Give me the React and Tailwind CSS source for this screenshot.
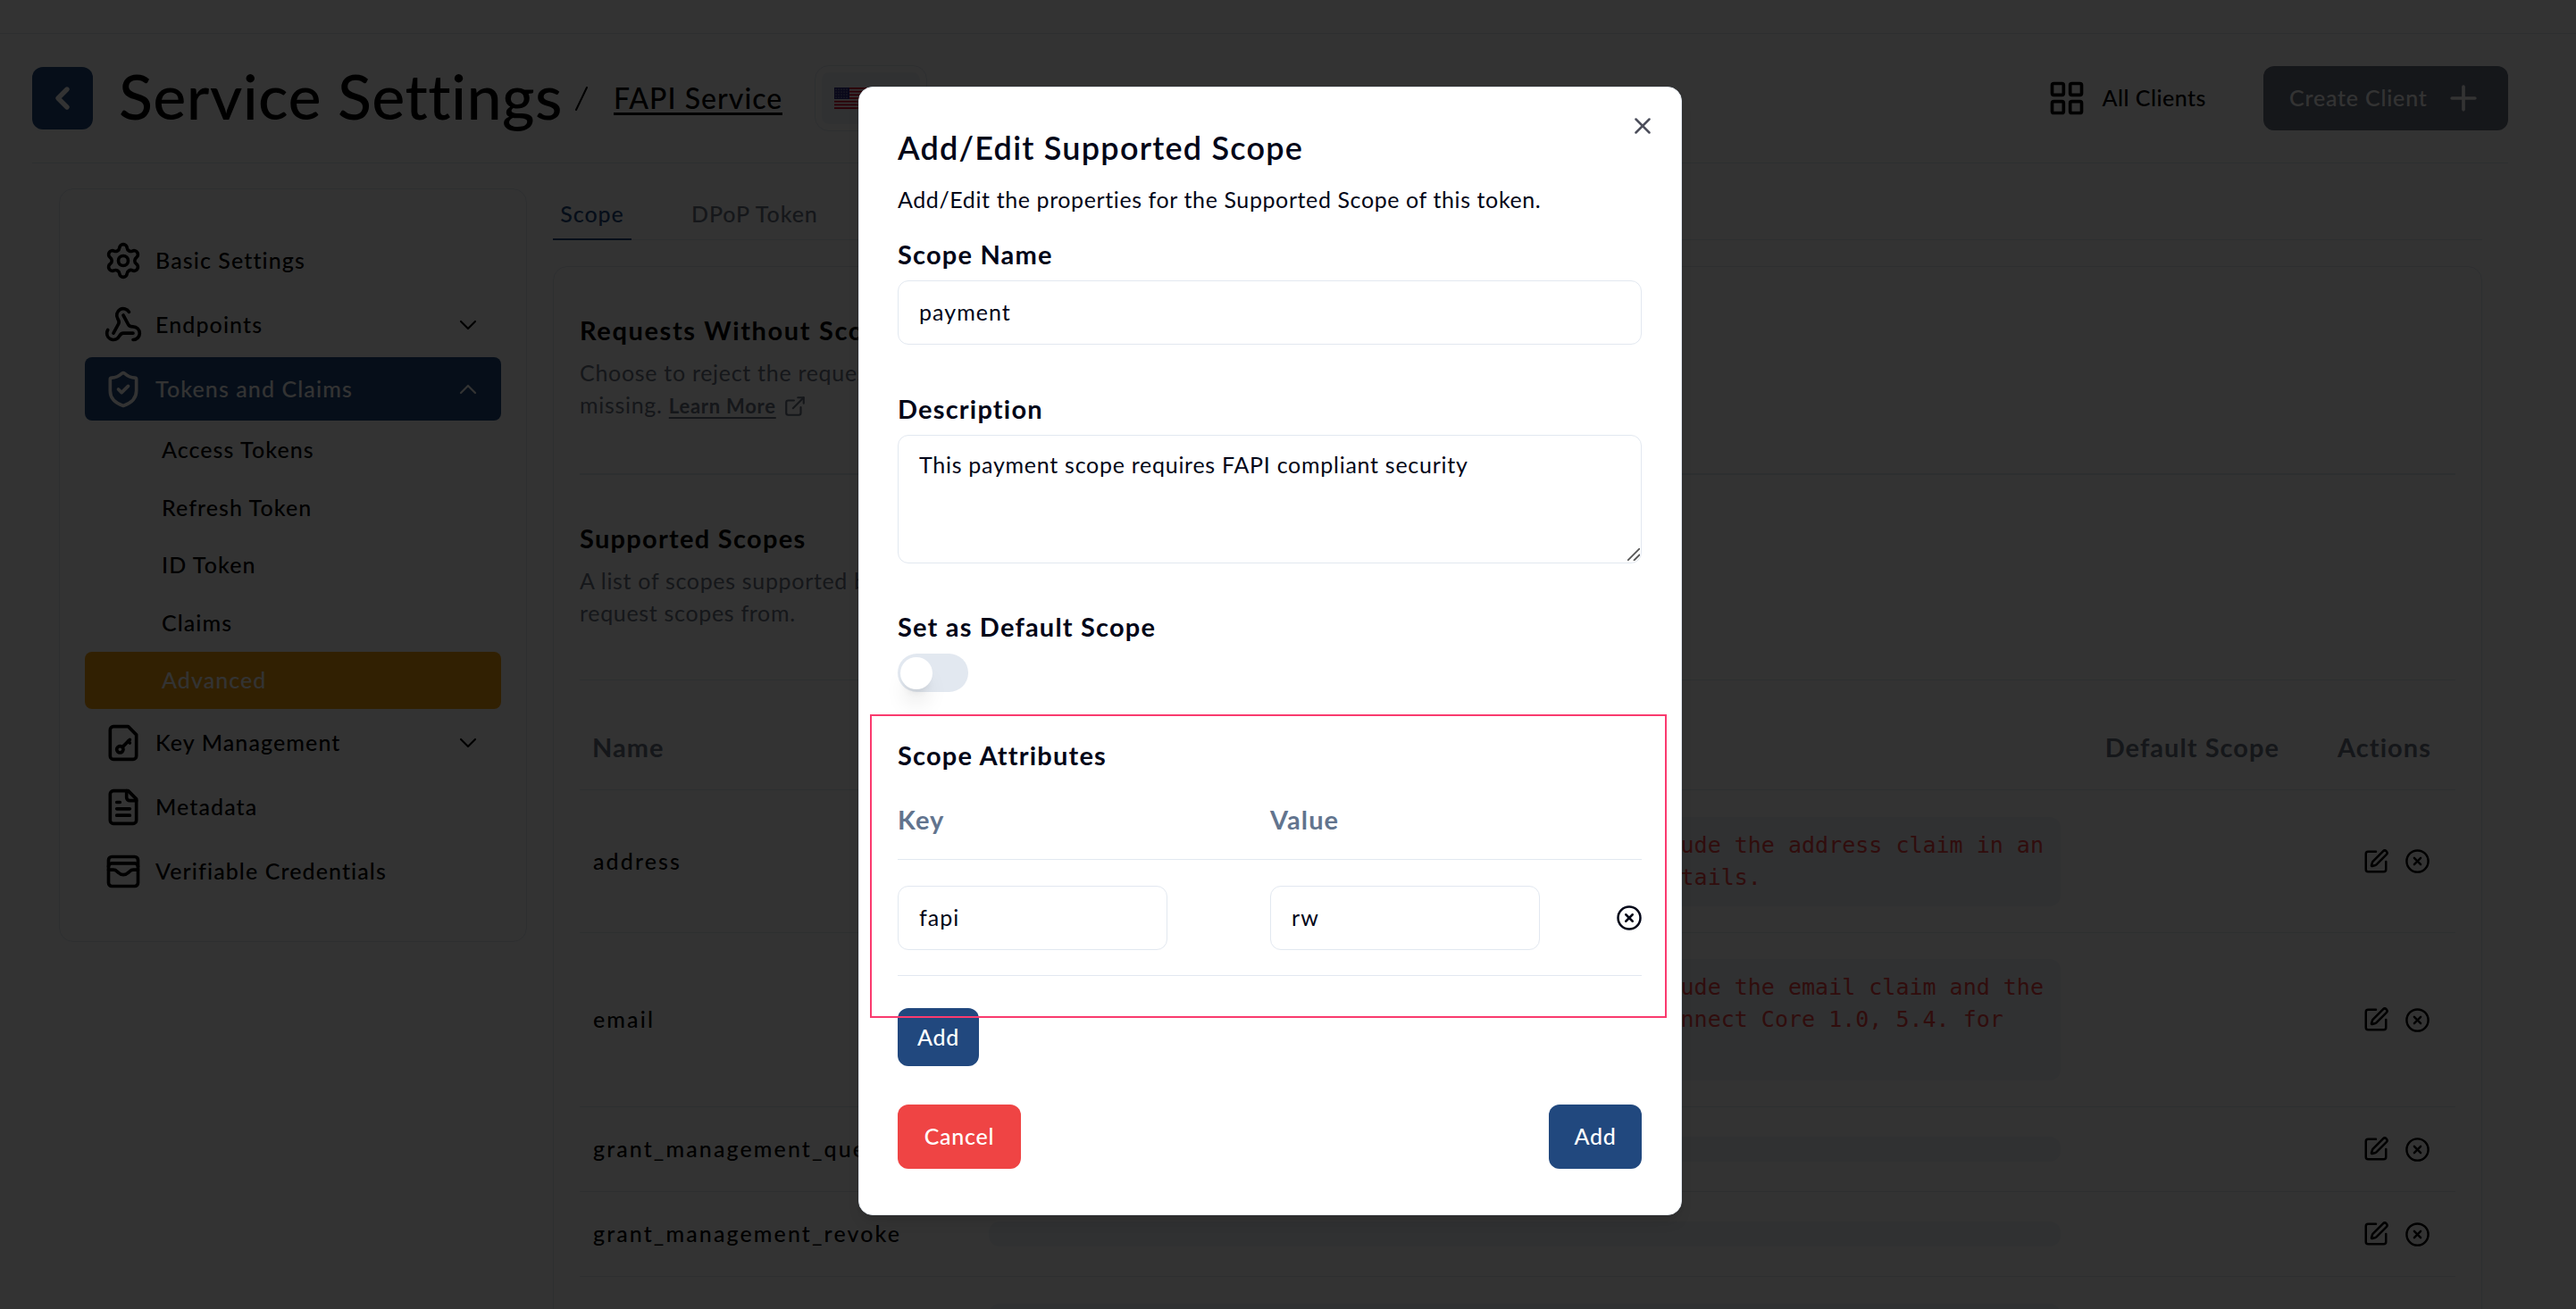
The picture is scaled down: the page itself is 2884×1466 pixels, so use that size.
import { useState } from "react";
import {
  ChevronDown,
  ChevronLeft,
  ChevronUp,
  CircleX,
  ExternalLink,
  LayoutGrid,
  Plus,
  Settings,
  ShieldCheck,
  SquarePen,
  WalletCards,
  Webhook,
  X,
} from "lucide-react";

function FileKeyIcon() {
  return (
    <svg width="44" height="44" viewBox="0 0 24 24" fill="none" stroke="currentColor" strokeWidth="2" strokeLinecap="round" strokeLinejoin="round">
      <path d="M15 2H6a2 2 0 0 0-2 2v16a2 2 0 0 0 2 2h12a2 2 0 0 0 2-2V7Z" />
      <circle cx="10" cy="16" r="2" />
      <path d="m16 10-4.5 4.5" />
      <path d="m15 11 1 1" />
    </svg>
  );
}

function FileTextIcon() {
  return (
    <svg width="44" height="44" viewBox="0 0 24 24" fill="none" stroke="currentColor" strokeWidth="2" strokeLinecap="round" strokeLinejoin="round">
      <path d="M15 2H6a2 2 0 0 0-2 2v16a2 2 0 0 0 2 2h12a2 2 0 0 0 2-2V7Z" />
      <path d="M14 2v4a2 2 0 0 0 2 2h4" />
      <path d="M10 9H8M16 13H8M16 17H8" />
    </svg>
  );
}

function Flag() {
  return (
    <svg width="44" height="24" viewBox="0 0 44 24">
      <rect width="44" height="24" fill="#fff" />
      {[0, 2, 4, 6, 8, 10, 12].map((i) => (
        <rect key={i} y={(i * 24) / 13} width="44" height={24 / 13} fill="#d80027" />
      ))}
      <rect width="17" height="13" fill="#2e2c80" />
      {[2, 5, 8, 11].map((y) =>
        [2, 5, 8, 11, 14].map((x) => <circle key={`${x}-${y}`} cx={x} cy={y} r="0.6" fill="#fff" />)
      )}
    </svg>
  );
}

const subItems = ["Access Tokens", "Refresh Token", "ID Token", "Claims", "Advanced"];

const scopes = [
  {
    name: "address",
    height: "h-[160px]",
    lines: [
      "A scope value that asks the login provider to include the address claim in an",
      "ID token. See OpenID Connect Core 1.0, 5.4. for details.",
    ],
  },
  {
    name: "email",
    height: "h-[195px]",
    lines: [
      "A scope value that asks the login provider to include the email claim and the",
      "email_verified claim in an ID token. See OpenID Connect Core 1.0, 5.4. for",
      "details.",
    ],
  },
  { name: "grant_management_query", height: "h-[95px]", lines: [] },
  { name: "grant_management_revoke", height: "h-[95px]", lines: [] },
  { name: "", height: "h-[160px]", lines: [" ", "  "] },
];

function MenuItem({ icon, label, chevron, active }) {
  return (
    <div
      className={`flex h-[71px] items-center gap-[14px] rounded-lg pr-[21px] pl-[21px] ${
        active ? "bg-[#21487e] text-white" : ""
      }`}
    >
      {icon}
      <span className="tracking-[0.044em]">{label}</span>
      {chevron && <span className="ml-auto">{chevron}</span>}
    </div>
  );
}

function Sidebar() {
  return (
    <aside className="flex h-[844px] w-[524px] shrink-0 flex-col gap-px rounded-2xl border border-slate-200 px-[28px] pt-[44px] text-[25px] font-medium">
      <MenuItem icon={<Settings size={44} />} label="Basic Settings" />
      <MenuItem icon={<Webhook size={44} />} label="Endpoints" chevron={<ChevronDown size={32} strokeWidth={1.6} />} />
      <MenuItem icon={<ShieldCheck size={44} />} label="Tokens and Claims" chevron={<ChevronUp size={32} strokeWidth={1.6} />} active />
      <ul className="flex flex-col gap-[0.5px] pb-px">
        {subItems.map((item) => (
          <li
            key={item}
            className={`flex h-16 items-center rounded-lg pl-[86px] tracking-[0.042em] ${
              item === "Advanced" ? "bg-[#f59e0b] text-white" : ""
            }`}
          >
            {item}
          </li>
        ))}
      </ul>
      <MenuItem icon={<FileKeyIcon />} label="Key Management" chevron={<ChevronDown size={32} strokeWidth={1.6} />} />
      <MenuItem icon={<FileTextIcon />} label="Metadata" />
      <MenuItem icon={<WalletCards size={44} />} label="Verifiable Credentials" />
    </aside>
  );
}

function Header() {
  return (
    <header className="mx-[36px] flex h-[145px] w-[2772px] items-center border-b border-slate-200">
      <button className="flex h-[70px] w-[68px] items-center justify-center rounded-xl bg-[#21487e] text-white">
        <ChevronLeft size={40} strokeWidth={3.2} />
      </button>
      <h1 className="ml-[29px] w-[511px] pb-1.5 text-[70px] leading-none font-medium tracking-[0.006em] whitespace-nowrap">
        Service Settings
      </h1>
      <svg width="14" height="27" viewBox="0 0 14 27" className="shrink-0" stroke="currentColor" strokeWidth="2" strokeLinecap="round">
        <path d="M1 26 13 1" />
      </svg>
      <a className="mt-[3px] ml-[29px] border-b-[3px] border-black text-[32px] leading-[32px] font-medium tracking-[0.032em] whitespace-nowrap">
        FAPI Service
      </a>
      <div className="ml-[36px] flex h-[74px] w-[126px] items-center rounded-2xl border border-slate-200 p-[7px]">
        <div className="flex h-[58px] w-full items-center rounded-lg bg-slate-100 pl-3.5">
          <Flag />
        </div>
      </div>
      <div className="ml-auto flex items-center gap-[18px] text-[25px] font-medium tracking-[0.02em]">
        <LayoutGrid size={44} />
        <span>All Clients</span>
      </div>
      <button className="ml-[64px] flex h-[72px] w-[274px] items-center justify-between rounded-xl bg-gray-500 pr-[28px] pl-[29px] text-[25px] font-medium tracking-[0.032em] text-white">
        Create Client
        <Plus size={44} />
      </button>
    </header>
  );
}

function ScopeTable() {
  return (
    <div>
      <div className="flex h-[123px] items-center border-b border-slate-200 pt-[28px] pr-[27px] pl-[14px] text-[29px] font-bold tracking-[0.036em] text-gray-500">
        <span>Name</span>
        <span className="ml-auto">Default Scope</span>
        <span className="ml-[65px]">Actions</span>
      </div>
      {scopes.map((scope) => (
        <div key={scope.name} className={`flex items-center border-b border-slate-200 pr-[28px] pl-[14px] ${scope.height}`}>
          <span className="w-[444px] pl-px text-[25px] font-medium tracking-[0.084em]">{scope.name}</span>
          <code className="block w-[1200px] rounded-xl bg-slate-100 py-[14px] pl-[22px] font-['DejaVu_Sans_Mono',monospace] text-[25px] leading-[36px] whitespace-pre text-[#ef4444]">
            {scope.lines.map((line) => (
              <span key={line} className="block">{line}</span>
            ))}
          </code>
          <span className="ml-auto flex items-center gap-[17px]">
            <SquarePen size={30} />
            <CircleX size={29} />
          </span>
        </div>
      ))}
    </div>
  );
}

function Content() {
  return (
    <main className="ml-[29px] w-[2160px] shrink-0">
      <nav className="flex h-[58px] items-stretch border-b border-slate-200 text-[25px] font-medium tracking-[0.036em] text-gray-500">
        <span className="-mb-px flex w-[88px] items-center justify-center border-b-2 border-[#21487e] pt-0.5 text-[#21487e]">Scope</span>
        <span className="ml-[67px] flex items-center">DPoP Token</span>
      </nav>
      <section className="mt-[29px] h-[1300px] rounded-2xl border border-slate-200 px-[29px] pt-[53px]">
        <h3 className="text-[29px] leading-[36px] font-bold tracking-[0.056em]">Requests Without Scope</h3>
        <p className="mt-[11px] text-[25px] leading-[36px] tracking-[0.028em] text-gray-500">
          Choose to reject the request or use the default scopes if scopes are
          <br />
          missing.{" "}
          <span className="inline-flex items-center gap-2">
            <a className="text-[22px] font-bold tracking-[0.034em] underline underline-offset-4">Learn More</a>
            <ExternalLink size={26} />
          </span>
        </p>
        <hr className="mt-[57px] border-t-2 border-slate-200" />
        <h3 className="mt-[53px] text-[29px] leading-[36px] font-bold tracking-[0.044em]">Supported Scopes</h3>
        <p className="mt-[11px] text-[25px] leading-[36px] tracking-[0.027em] text-gray-500">
          A list of scopes supported by this service which clients can
          <br />
          request scopes from.
        </p>
        <hr className="mt-[57px] border-t border-slate-200" />
        <ScopeTable />
      </section>
    </main>
  );
}

const inputClass = "h-[72px] rounded-xl border border-slate-200 px-[23px] pb-0.5 text-[25px] tracking-[0.042em] outline-none";
const labelClass = "block text-[29px] leading-[36px] font-bold tracking-[0.041em]";

function ScopeModal() {
  const [name, setName] = useState("payment");
  const [description, setDescription] = useState("This payment scope requires FAPI compliant security");
  const [attribute, setAttribute] = useState({ key: "fapi", value: "rw" });

  return (
    <div className="absolute top-[97px] left-[961px] flex h-[1264px] w-[922px] flex-col rounded-2xl border border-slate-200 bg-white pt-[47px] pr-[44px] pl-[43px] text-slate-950 shadow-lg">
      <button className="absolute top-[28px] right-[28px] opacity-70">
        <X size={30} />
      </button>

      <h2 className="text-4xl leading-[40px] font-semibold tracking-[0.034em]">Add/Edit Supported Scope</h2>
      <p className="mt-[20px] text-[25px] leading-[36px] tracking-[0.024em]">
        Add/Edit the properties for the Supported Scope of this token.
      </p>

      <label className={`mt-[26px] ${labelClass}`}>Scope Name</label>
      <input className={`mt-[11px] ${inputClass}`} value={name} onChange={(e) => setName(e.target.value)} />

      <label className={`mt-[54px] ${labelClass}`}>Description</label>
      <div className="relative mt-[11px] h-[144px]">
        <textarea
          className="block h-full w-full resize-none rounded-xl border border-slate-200 px-[23px] pt-[14px] text-[25px] leading-[36px] tracking-[0.029em] outline-none"
          value={description}
          onChange={(e) => setDescription(e.target.value)}
        />
        <svg className="absolute right-[2px] bottom-[3px]" width="14" height="14" viewBox="0 0 14 14" stroke="#555" strokeWidth="1.8">
          <path d="M0 14 14 0M7 14l7-7" />
        </svg>
      </div>

      <label className={`mt-[53px] ${labelClass}`}>Set as Default Scope</label>
      <div className="mt-[12px] flex h-[43px] w-[79px] shrink-0 items-center rounded-full bg-slate-200 px-[3px]">
        <span className="size-[36px] rounded-full bg-white shadow-xl" />
      </div>

      <label className={`mt-[53px] ${labelClass}`}>Scope Attributes</label>
      <div className="flex h-[99px] items-end border-b border-slate-200 pb-[26px] text-[29px] leading-[36px] font-bold tracking-[0.038em] text-slate-500">
        <span className="w-[417px]">Key</span>
        <span>Value</span>
      </div>
      <div className="flex h-[130px] items-center border-b border-slate-200 pt-px">
        <input
          className={`w-[302px] ${inputClass}`}
          value={attribute.key}
          onChange={(e) => setAttribute({ ...attribute, key: e.target.value })}
        />
        <input
          className={`ml-[115px] w-[302px] ${inputClass}`}
          value={attribute.value}
          onChange={(e) => setAttribute({ ...attribute, value: e.target.value })}
        />
        <CircleX size={30} className="-mr-px mb-px ml-auto" />
      </div>
      <button className="mt-[36px] h-[65px] w-[91px] rounded-xl bg-[#21487e] text-[25px] font-medium tracking-[0.03em] text-white">Add</button>

      <div className="mt-[43px] flex justify-between text-[25px] font-medium tracking-[0.03em] text-white">
        <button className="h-[72px] w-[138px] rounded-xl bg-[#ef4444]">Cancel</button>
        <button className="h-[72px] w-[104px] rounded-xl bg-[#21487e]">Add</button>
      </div>

      <div className="pointer-events-none absolute top-[702px] left-[12px] h-[340px] w-[892px] border-2 border-[#fa3a6e]" />
    </div>
  );
}

export default function App() {
  return (
    <div className="relative h-[1466px] w-[2884px] overflow-hidden bg-white font-[Lato,sans-serif] text-black">
      <div className="h-[38px] border-b border-slate-200" />
      <Header />
      <div className="mt-[28px] flex items-start pl-[66px]">
        <Sidebar />
        <Content />
      </div>

      <div className="absolute inset-0 bg-black/80" />
      <ScopeModal />
    </div>
  );
}
